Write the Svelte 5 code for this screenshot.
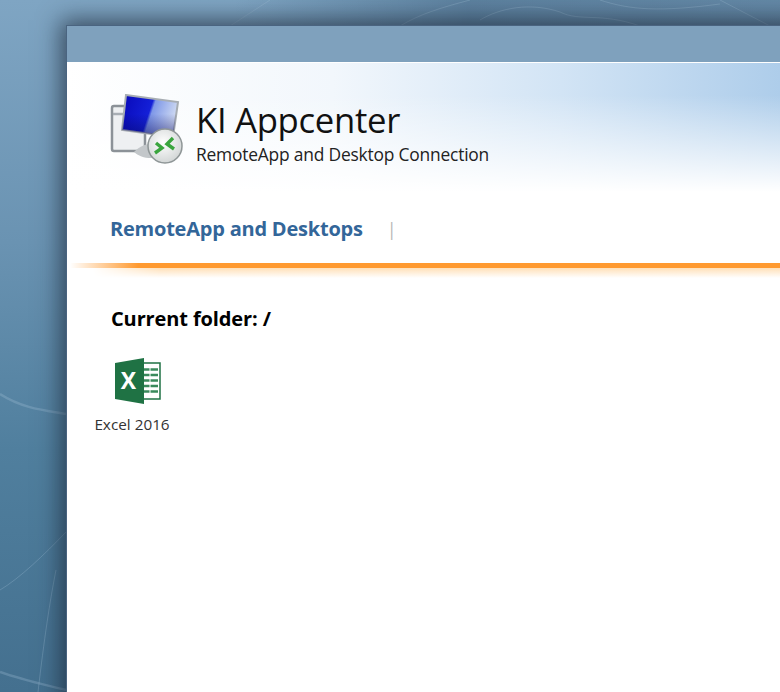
<script>
  const apps = [{ name: 'Excel 2016' }];
</script>

<div class="desktop">
  <svg class="backdrop" width="780" height="692" viewBox="0 0 780 692" fill="none" stroke="#a9c6da" stroke-opacity="0.28">
    <path d="M0 394 C22 408 42 410 66 414" stroke-width="2.5" />
    <path d="M0 672 C22 680 42 684 66 690" stroke-width="2.5" />
    <path d="M0 590 C20 578 44 555 66 532" />
    <path d="M38 692 C44 640 50 600 56 570" />
    <path d="M230 26 L270 0 M400 26 C420 14 440 8 470 0 M480 20 C500 8 530 2 560 12 C580 22 600 12 640 26 M600 0 C630 10 660 12 720 4 M720 0 L770 26" />
  </svg>
  <main class="window">
    <div class="titlebar"></div>
    <div class="content">
      <header class="banner">
        <svg class="logo" width="74" height="72" viewBox="0 0 74 72">
          <defs>
            <linearGradient id="screen" x1="0" y1="0" x2="1" y2="0.25">
              <stop offset="0" stop-color="#0808b8" />
              <stop offset="0.55" stop-color="#1420d8" />
              <stop offset="0.6" stop-color="#7f98e8" />
              <stop offset="1" stop-color="#cbd7f2" />
            </linearGradient>
            <linearGradient id="shade" x1="0" y1="0" x2="0" y2="1">
              <stop offset="0.45" stop-color="#04045c" stop-opacity="0" />
              <stop offset="1" stop-color="#04045c" stop-opacity="0.55" />
            </linearGradient>
            <radialGradient id="disc" cx="0.45" cy="0.4" r="0.65">
              <stop offset="0" stop-color="#ffffff" />
              <stop offset="1" stop-color="#cfd3d3" />
            </radialGradient>
          </defs>
          <rect x="2" y="12" width="33" height="45" fill="#eef0f2" stroke="#8c9298" stroke-width="2.5" rx="2" />
          <path d="M3 20 H34" stroke="#a8aeb4" stroke-width="2.5" />
          <path d="M24 58 C32 50 42 48 50 50 L52 62 C42 66 30 64 24 58Z" fill="#c3c7ca" />
          <path d="M16 1 L68 8 L63 43 L12 36Z" fill="url(#screen)" stroke="#a7adb3" stroke-width="2" />
          <path d="M16 1 L68 8 L63 43 L12 36Z" fill="url(#shade)" />
          <circle cx="55" cy="52" r="17" fill="url(#disc)" stroke="#8f9697" stroke-width="1.5" />
          <path d="M46 49 L52 54 L45 59" fill="none" stroke="#3aa53e" stroke-width="3.4" />
          <path d="M63 44 L57 50 L64 55" fill="none" stroke="#3aa53e" stroke-width="3.4" />
        </svg>
        <div class="titles">
          <h1>KI Appcenter</h1>
          <p>RemoteApp and Desktop Connection</p>
        </div>
      </header>

      <nav class="tabs">
        <a href="#apps">RemoteApp and Desktops</a>
        <span class="sep">|</span>
      </nav>
      <div class="rule"></div>

      <section class="folder">
        <h2>Current folder: /</h2>
        <div class="apps">
          {#each apps as app}
            <div class="app">
              <svg width="46" height="46" viewBox="0 0 46 46">
                <rect x="24" y="5" width="21" height="36" fill="#fff" stroke="#1f7244" stroke-width="1.5" />
                <path d="M29 11.5 H43 M29 17 H43 M29 22.5 H43 M29 28 H43 M29 33.5 H43" stroke="#3a8a5c" stroke-width="2.6" />
                <path d="M35 8 V37" stroke="#fff" stroke-width="1" />
                <path d="M0 5 L29 0 V46 L0 41Z" fill="#1f7244" />
                <text x="13.5" y="31" class="x-mark" text-anchor="middle">X</text>
              </svg>
              <span>{app.name}</span>
            </div>
          {/each}
        </div>
      </section>
    </div>
  </main>
</div>

<style>
  :global(body) {
    margin: 0;
    overflow: hidden;
  }

  .desktop {
    position: relative;
    width: 780px;
    height: 692px;
    overflow: hidden;
    padding: 25px 0 0 66px;
    box-sizing: border-box;
    background: linear-gradient(180deg, #7fa5c3 0%, #6a93b2 35%, #507f9e 65%, #44708f 100%);
    font-family: "Open Sans", "Noto Sans", sans-serif;
  }

  .desktop::before {
    content: "";
    position: absolute;
    inset: 0 0 auto 0;
    height: 26px;
    background: linear-gradient(90deg, transparent 30%, rgba(60, 95, 125, 0.5) 60%, rgba(60, 95, 125, 0.4) 100%);
  }

  .backdrop {
    position: absolute;
    top: 0;
    left: 0;
  }

  .window {
    position: relative;
    width: 760px;
    height: 680px;
    border: 1px solid #4a6480;
    border-right: none;
    border-bottom: none;
    background: #fff;
    box-shadow: 0 0 22px 5px rgba(25, 35, 50, 0.68);
  }

  .titlebar {
    height: 36px;
    background: #7fa1bd;
    border-bottom: 1px solid #fff;
  }

  .content {
    background: #fff;
  }

  .banner {
    display: flex;
    align-items: flex-start;
    gap: 12px;
    height: 129px;
    padding: 31px 0 0 43px;
    box-sizing: border-box;
    background:
      linear-gradient(180deg, rgba(255, 255, 255, 0) 0%, rgba(255, 255, 255, 0) 25%, #fff 100%),
      linear-gradient(90deg, #fff 0%, #f2f7fc 35%, #d2e4f5 65%, #a6c8e8 100%);
  }

  .logo {
    flex: none;
  }

  .titles {
    padding-top: 4px;
  }

  h1 {
    margin: 0;
    font-size: 34.7px;
    line-height: 44px;
    font-weight: 400;
    color: #111;
    letter-spacing: -0.3px;
  }

  .titles p {
    margin: 0;
    font-size: 17.4px;
    line-height: 24px;
    color: #222;
    letter-spacing: -0.2px;
  }

  .tabs {
    display: flex;
    align-items: center;
    gap: 24px;
    height: 71px;
    padding: 2px 0 0 43px;
    box-sizing: border-box;
  }

  .tabs a {
    color: #336699;
    font-size: 20px;
    font-weight: 700;
    text-decoration: none;
    letter-spacing: -0.22px;
  }

  .sep {
    color: #b8b8b8;
    font-size: 18px;
  }

  .rule {
    height: 5px;
    background: linear-gradient(90deg, #fff 0%, #ff9a30 9%, #ff9a30 100%);
    position: relative;
    margin-left: 3px;
  }

  .rule::after {
    content: "";
    position: absolute;
    left: 0;
    right: 0;
    top: 5px;
    height: 10px;
    background: linear-gradient(180deg, #ffe0b8 0%, #fff 100%);
    -webkit-mask-image: linear-gradient(90deg, transparent 3%, #000 12%);
  }

  .folder {
    padding: 38px 0 0 44px;
  }

  h2 {
    margin: 0;
    font-size: 20px;
    line-height: 26px;
    font-weight: 700;
    color: #000;
    letter-spacing: -0.12px;
  }

  .apps {
    display: flex;
    margin: 26px 0 0 -17px;
  }

  .app {
    display: flex;
    flex-direction: column;
    align-items: center;
    width: 76px;
    gap: 11px;
  }

  .app svg {
    margin-left: 12px;
  }

  .app span {
    font-size: 15.3px;
    line-height: 19px;
    color: #333;
    white-space: nowrap;
  }

  .x-mark {
    fill: #fff;
    font-family: "Open Sans", sans-serif;
    font-weight: 700;
    font-size: 23px;
  }
</style>
